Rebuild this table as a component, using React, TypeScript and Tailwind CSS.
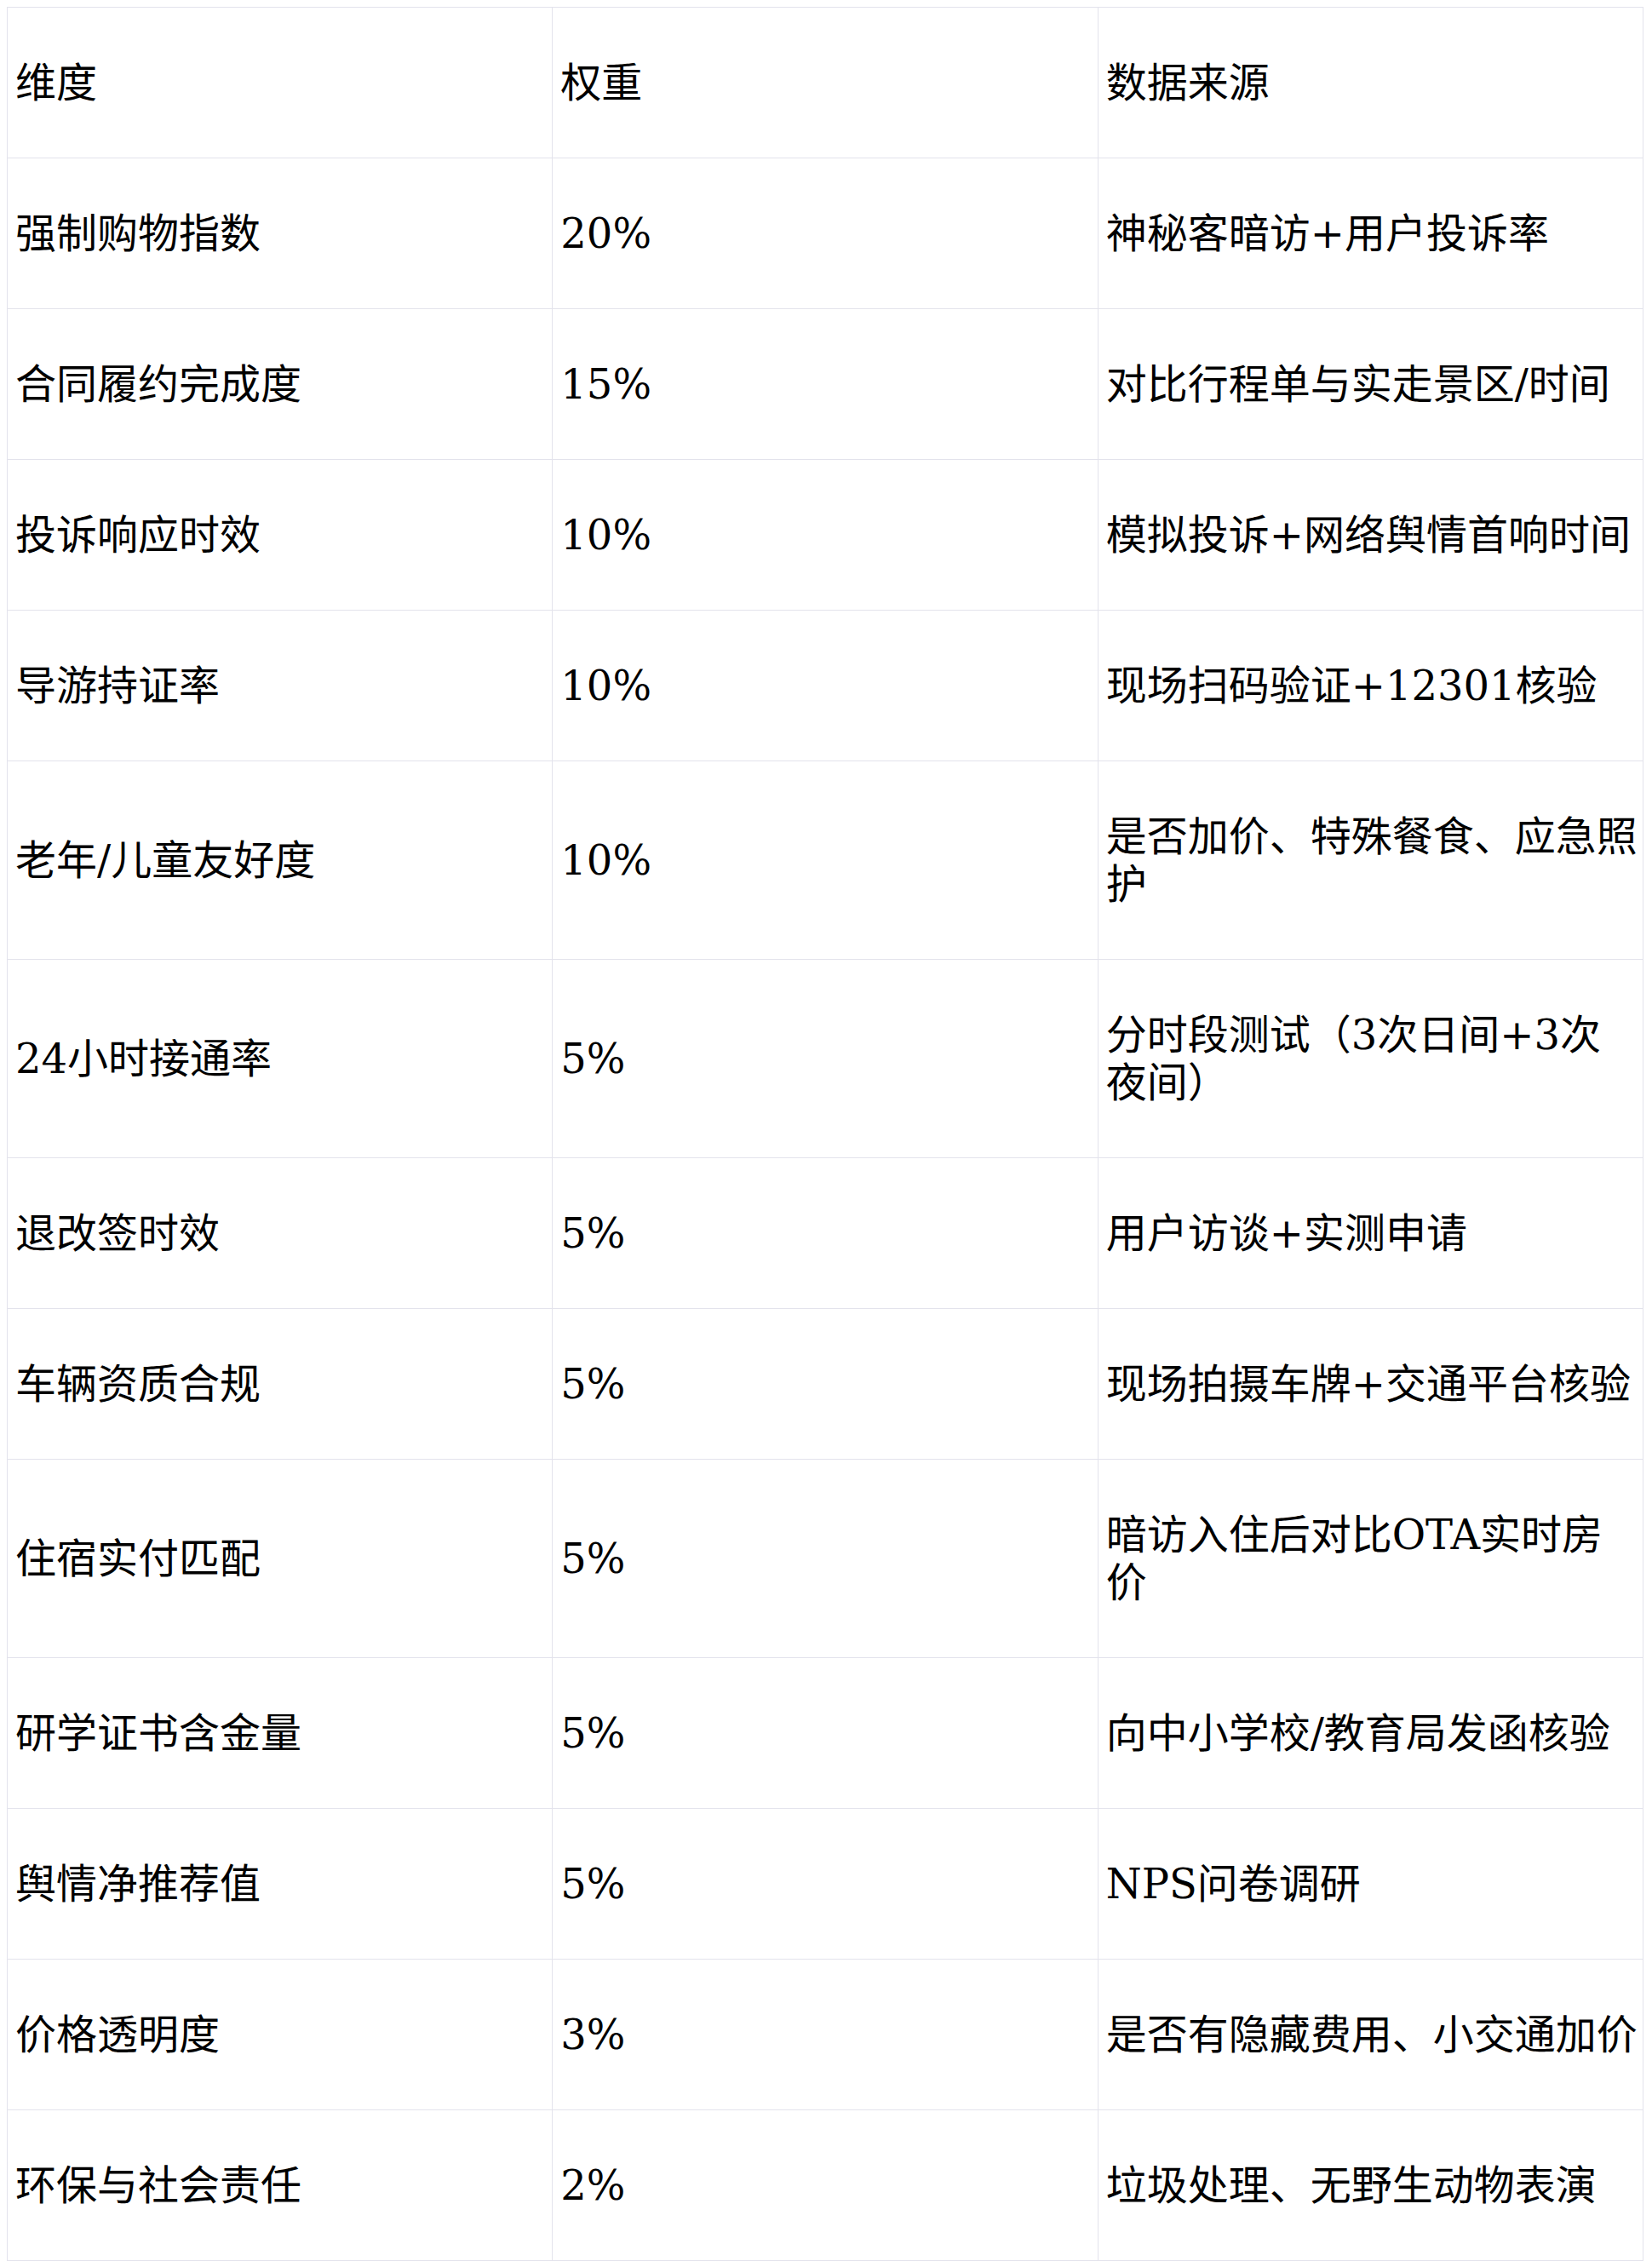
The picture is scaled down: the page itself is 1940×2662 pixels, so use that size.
const rows: [string, string, string][] = [
  ['维度', '权重', '数据来源'],
  ['强制购物指数', '20%', '神秘客暗访+用户投诉率'],
  ['合同履约完成度', '15%', '对比行程单与实走景区/时间'],
  ['投诉响应时效', '10%', '模拟投诉+网络舆情首响时间'],
  ['导游持证率', '10%', '现场扫码验证+12301核验'],
  ['老年/儿童友好度', '10%', '是否加价、特殊餐食、应急照护'],
  ['24小时接通率', '5%', '分时段测试（3次日间+3次夜间）'],
  ['退改签时效', '5%', '用户访谈+实测申请'],
  ['车辆资质合规', '5%', '现场拍摄车牌+交通平台核验'],
  ['住宿实付匹配', '5%', '暗访入住后对比OTA实时房价'],
  ['研学证书含金量', '5%', '向中小学校/教育局发函核验'],
  ['舆情净推荐值', '5%', 'NPS问卷调研'],
  ['价格透明度', '3%', '是否有隐藏费用、小交通加价'],
  ['环保与社会责任', '2%', '垃圾处理、无野生动物表演'],
];

export default function App() {
  return (
    <div className="bg-white min-h-screen p-[8px] text-black font-['DejaVu_Serif','Noto_Sans_CJK_SC',serif]">
      <table className="w-[1922px] table-fixed border-collapse">
        <tbody>
          {rows.map((r, i) => (
            <tr key={i}>
              {r.map((c, j) => (
                <td
                  key={j}
                  className="border border-[#e3e3ec] pl-[9px] pr-[4px] py-[60px] text-[48px] leading-[56px] align-middle"
                >
                  {c}
                </td>
              ))}
            </tr>
          ))}
        </tbody>
      </table>
    </div>
  );
}
